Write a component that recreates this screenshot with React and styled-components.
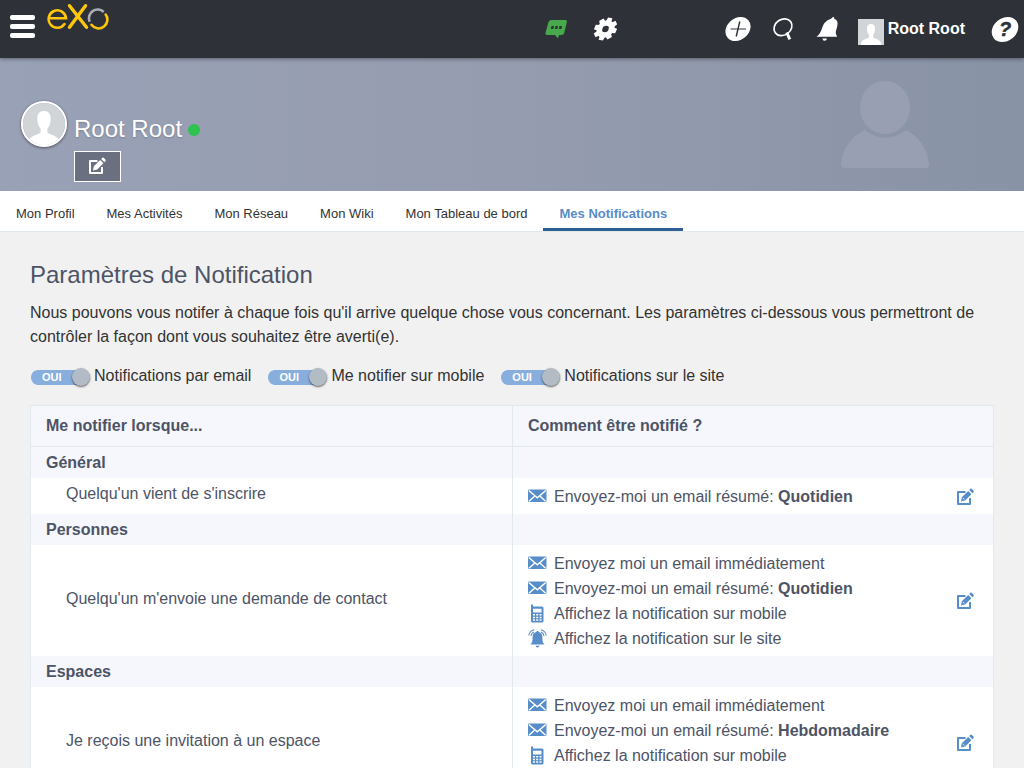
import React from "react";
import styled, { createGlobalStyle } from "styled-components";

const GlobalStyle = createGlobalStyle`
  *, *::before, *::after { box-sizing: border-box; }
  body {
    margin: 0;
    background: #f1f1f1;
    color: #333;
    font-family: "Liberation Sans", Arial, sans-serif;
    font-size: 16px;
    line-height: 24px;
  }
`;

const Page = styled.div`
  height: 100vh;
  overflow: hidden;
`;

const TopBar = styled.header`
  position: relative;
  display: flex;
  align-items: center;
  height: 58px;
  padding: 0 5px 0 10px;
  background: #2e3238;
  box-shadow: 0 1px 4px rgba(0, 0, 0, 0.4);
`;

const IconButton = styled.button`
  display: flex;
  flex: none;
  padding: 0;
  border: 0;
  background: none;
  color: ${(p) => p.$color || "#fff"};
  cursor: pointer;
`;

const MenuButton = styled(IconButton)`
  flex-direction: column;
  gap: 4px;
  width: 25px;
  padding-bottom: 5px;
`;

const MenuBar = styled.span`
  height: 5px;
  border-radius: 2px;
  background: #fff;
`;

const LogoLink = styled.a`
  display: flex;
  align-self: flex-start;
  margin: 3px auto 0 12px;
`;

const CenterTools = styled.div`
  display: flex;
  gap: 25px;
  margin-right: 107px;
`;

const RightTools = styled.div`
  display: flex;
  align-items: center;
  gap: 20px;
`;

const UserLink = styled.a`
  display: flex;
  gap: 4px;
  padding: 6px 6px 0 0;
  color: #fff;
  font-weight: bold;
  line-height: 20px;
  text-decoration: none;
  white-space: nowrap;
`;

const Banner = styled.section`
  display: flex;
  justify-content: space-between;
  align-items: flex-end;
  height: 133px;
  padding: 0 95px 9px 21px;
  background: linear-gradient(90deg, #99a1b6, #959caf 50%, #8993a6);
`;

const Profile = styled.div`
  display: flex;
  gap: 7px;
`;

const RoundAvatar = styled.span`
  display: flex;
  flex: none;
  width: 46px;
  height: 46px;
  overflow: hidden;
  border: 2px solid #fff;
  border-radius: 50%;
  box-shadow: 0 1px 3px rgba(0, 0, 0, 0.5);
`;

const ProfileBody = styled.div`
  padding-top: 13px;
`;

const ProfileName = styled.h1`
  display: flex;
  align-items: center;
  gap: 6px;
  margin: 0 0 7px;
  color: #fff;
  font-size: 24px;
  font-weight: normal;
  line-height: 30px;
  text-shadow: 0 1px 2px rgba(0, 0, 0, 0.2);
`;

const OnlineDot = styled.span`
  width: 12px;
  height: 12px;
  margin-top: 2px;
  border-radius: 50%;
  background: #2fc24f;
`;

const EditProfile = styled(IconButton)`
  justify-content: center;
  align-items: center;
  width: 47px;
  height: 31px;
  padding: 0 2px 2px 0;
  border: 1px solid #fff;
  background: #6b7080;
`;

const BannerFigure = styled.svg`
  flex: none;
  margin-bottom: 14px;
`;

const Tabs = styled.nav`
  display: flex;
  height: 41px;
  border-bottom: 1px solid #e1e8ee;
  background: #fff;
`;

const Tab = styled.a`
  padding: 4px 16px 0;
  border-bottom: 3px solid ${(p) => (p.$active ? "#2f5e92" : "transparent")};
  color: ${(p) => (p.$active ? "#578dc9" : "#333")};
  font-size: 13px;
  font-weight: ${(p) => (p.$active ? "bold" : "normal")};
  line-height: 37px;
  text-decoration: none;
  white-space: nowrap;
`;

const Main = styled.main`
  padding: 23px 30px 30px;
`;

const Title = styled.h2`
  margin: 0;
  color: #4d5466;
  font-size: 24px;
  font-weight: normal;
  line-height: 40px;
`;

const Intro = styled.p`
  margin: 6px 0 15px;
`;

const Switches = styled.div`
  display: flex;
  flex-wrap: wrap;
  gap: 16px;
  margin-bottom: 17px;
`;

const SwitchLabel = styled.label`
  display: flex;
  align-items: center;
  gap: 4px;
  cursor: pointer;
`;

const SwitchTrack = styled.span`
  display: flex;
  align-items: center;
  justify-content: space-between;
  width: 60px;
  height: 15px;
  margin-top: 2px;
  padding-left: 11px;
  border-left: 1px solid transparent;
  border-radius: 8px;
  background: #88aede padding-box;
  color: #fff;
  font-size: 11px;
  font-weight: bold;
  line-height: 15px;
`;

const SwitchInput = styled.input`
  appearance: none;
  width: 18px;
  height: 18px;
  margin: 0;
  border-radius: 50%;
  background: #b3bbc4;
  box-shadow: 0 1px 2px rgba(0, 0, 0, 0.6);
`;

const SettingsTable = styled.table`
  width: 100%;
  table-layout: fixed;
  border: 1px solid #e1e8ee;
  border-spacing: 0;
  background: #fff;
  color: #4d5466;
`;

const Cell = styled.td`
  padding: 0;
  text-align: left;

  & + & {
    border-left: 1px solid #e1e8ee;
  }
`;

const HeadCell = styled(Cell)`
  height: 41px;
  padding: 0 15px;
  border-bottom: 1px solid #e1e8ee;
  background: #f5f7fc;
`;

const CategoryCell = styled(Cell)`
  height: 31px;
  padding: 0 15px;
  background: #f5f7fc;
  font-weight: bold;
`;

const TriggerCell = styled(Cell)`
  padding: 0 15px 4px 35px;
`;

const MethodCell = styled(Cell)`
  padding: 6px 19px 5px 15px;
`;

const MethodLayout = styled.div`
  display: flex;
  align-items: center;
  justify-content: space-between;
`;

const MethodList = styled.ul`
  margin: 0;
  padding: 0;
  list-style: none;
`;

const Method = styled.li`
  display: flex;
  align-items: center;
  gap: 7px;
  line-height: 25px;
`;

const MethodIcon = styled.svg`
  flex: none;
  color: #578dc9;
`;

function Person({ size }) {
  return (
    <svg width={size} height={size} viewBox="0 0 26 26" aria-hidden="true">
      <path fill="#d1d5d8" d="M0 0h26v26H0z" />
      <path
        fill="#fff"
        d="M13 5c-3 0-4.300 2-4.100 5 .1 3 .9 4.500 2 6v2.300c-1 1.500-6.900 1.600-7.900 6V26h20v-1.700c-1-4.400-6.900-4.500-7.900-6V16c1.100-1.500 1.900-3 2-6 .2-3-1.100-5-4.100-5z"
      />
    </svg>
  );
}

function EditIcon() {
  return (
    <svg width="18" height="18" viewBox="0 0 18 18" aria-hidden="true">
      <path fill="none" stroke="currentColor" strokeWidth="2" strokeLinejoin="round" d="M9.500 4H2v12h12V10" />
      <path fill="currentColor" d="M5 13.500l.8-4.300 6.400-6.200 3.200 3.200-6.200 6.300zM13.200 2.100l1.300-1.300q.6-.6 1.200 0l1.900 1.900q.6.600 0 1.200L16.400 5.200z" />
      <path fill="none" stroke="#fff" strokeOpacity=".8" strokeWidth=".8" d="M7.200 9.800l.3 1.300 1.200.3" />
    </svg>
  );
}

function Logo() {
  return (
    <svg width="62" height="28" viewBox="0 0 62 28" fill="none" stroke="#ffc60a" strokeWidth="2.600" strokeLinecap="round" aria-hidden="true">
      <path d="M4 15.300H19A8.700 8.700 0 1 0 17.500 21" />
      <path strokeWidth="3.400" d="M22.500 2.700L39.500 24.300M38.500 2.700L22.500 24.300" />
      <path strokeLinecap="butt" stroke="#a9adb4" d="M42.700 18.800A8.700 8.700 0 0 1 56.700 9" />
      <path d="M58.700 11.500A8.700 8.700 0 0 1 44.500 21.800" />
    </svg>
  );
}

function ChatIcon() {
  return (
    <svg width="24" height="24" viewBox="0 0 24 24" aria-hidden="true">
      <path fill="#48a84c" d="M7.500 3H21.500Q23.300 3 22.900 5L20.300 15.800Q19.700 18 17.500 18H15.200L13.800 21.300 11 18H3.200Q1 18 1.500 16L4.500 5Q5.200 3 7.500 3z" />
      <path fill="#2e3238" d="M7.500 9h2.500l-.6 3H6.900zM11.500 9H14l-.6 3h-2.500zM15.500 9H18l-.6 3h-2.500z" />
    </svg>
  );
}

function GearIcon() {
  return (
    <svg width="24" height="24" viewBox="0 0 24 24" aria-hidden="true">
      <g transform="translate(12.500 12) skewX(-14)">
        <circle r="6" fill="none" stroke="currentColor" strokeWidth="5.600" />
        {[0, 45, 90, 135, 180, 225, 270, 315].map((angle) => (
          <path key={angle} fill="currentColor" transform={`rotate(${angle + 10})`} d="M-2.800-7.500L-2.300-11.300H2.300L2.800-7.500z" />
        ))}
      </g>
    </svg>
  );
}

function PlusIcon() {
  return (
    <svg width="28" height="28" viewBox="0 0 28 28" aria-hidden="true">
      <ellipse cx="14" cy="14" rx="13.600" ry="10.900" fill="currentColor" transform="rotate(-40 14 14)" />
      <path stroke="#6b7078" strokeWidth="1.400" d="M6.500 14H22" />
      <path stroke="#2e3238" strokeWidth="1.400" d="M15.800 6.500l-3.600 15" />
    </svg>
  );
}

function SearchIcon() {
  return (
    <svg width="24" height="24" viewBox="0 0 24 24" fill="none" stroke="currentColor" aria-hidden="true">
      <ellipse cx="11" cy="10.200" rx="9.500" ry="7.800" strokeWidth="1.700" transform="rotate(-35 11 10.200)" />
      <path strokeWidth="3" d="M14.800 15.500L17.800 22.300" />
    </svg>
  );
}

function BellIcon() {
  return (
    <svg width="22" height="26" viewBox="0 0 22 26" fill="currentColor" aria-hidden="true">
      <path d="M15.500 2.500Q16 1 17.300 1T18.200 2.800C21.500 4 22 6.500 21.300 10L19.700 16Q19.500 18.500 21.200 20.700H0.500C6 17 5.500 11 8.500 7Q11 3.500 15.500 2.500zM6.500 22.500H11Q10.500 24.800 8.500 24.800T6.500 22.500z" />
    </svg>
  );
}

function HelpIcon() {
  return (
    <svg width="28" height="28" viewBox="0 0 28 28" aria-hidden="true">
      <ellipse cx="14" cy="14.500" rx="14.300" ry="11.400" fill="currentColor" transform="rotate(-38 14 14.500)" />
      <text x="14" y="21" textAnchor="middle" fill="#2e3238" stroke="#2e3238" strokeWidth=".5" fontFamily="Liberation Sans, sans-serif" fontSize="20" fontWeight="bold" fontStyle="italic">?</text>
    </svg>
  );
}

const METHOD_DRAWINGS = {
  mail: (
    <>
      <rect x="0" y="2.500" width="18.500" height="12.500" rx="1" fill="currentColor" />
      <path fill="none" stroke="#fff" strokeWidth="1.400" d="M.8 3.500l8.500 7.300 8.500-7.300M1 14.300l5.500-5M17.600 14.300l-5.500-5" />
    </>
  ),
  mobile: (
    <>
      <path fill="currentColor" d="M3 1.500Q3 .3 4 .3T5 1.500V2.500h9q1.500 0 1.500 1.500v13q0 1.500-1.500 1.500H4.500Q3 18.500 3 17z" />
      <path fill="#fff" d="M5 4.800h8.500v3.700H5zM5 10h2v1.500H5zM8.200 10h2v1.500h-2zM11.500 10h2v1.500h-2zM5 12.700h2v1.500H5zM8.200 12.700h2v1.500h-2zM11.500 12.700h2v1.500h-2zM5 15.300h2v1.500H5zM8.200 15.300h2v1.500h-2zM11.500 15.300h2v1.500h-2z" />
    </>
  ),
  bell: (
    <>
      <path fill="currentColor" d="M8.300 3q0-1 1.200-1t1.200 1c2.600.6 3.700 2.500 3.700 5.200 0 4.300.6 5.800 2.300 7.300H2.300c1.700-1.500 2.300-3 2.300-7.300C4.600 5.500 5.700 3.600 8.300 3zM7.500 16.700h4q-.5 1.800-2 1.800t-2-1.800z" />
      <path fill="none" stroke="currentColor" strokeWidth="1.100" d="M.8 6.500Q1.500 2 6.300.8M3 6.800Q3.400 4 6 3M18.200 6.500Q17.500 2 12.700.8M16 6.800Q15.600 4 13 3" />
    </>
  ),
};

const TABS = ["Mon Profil", "Mes Activités", "Mon Réseau", "Mon Wiki", "Mon Tableau de bord", "Mes Notifications"];
const SWITCHES = ["Notifications par email", "Me notifier sur mobile", "Notifications sur le site"];

const allMethods = (frequency) => [
  { icon: "mail", text: "Envoyez moi un email immédiatement" },
  { icon: "mail", text: "Envoyez-moi un email résumé: ", frequency },
  { icon: "mobile", text: "Affichez la notification sur mobile" },
  { icon: "bell", text: "Affichez la notification sur le site" },
];

const GROUPS = [
  {
    name: "Général",
    trigger: "Quelqu'un vient de s'inscrire",
    methods: [{ icon: "mail", text: "Envoyez-moi un email résumé: ", frequency: "Quotidien" }],
  },
  { name: "Personnes", trigger: "Quelqu'un m'envoie une demande de contact", methods: allMethods("Quotidien") },
  { name: "Espaces", trigger: "Je reçois une invitation à un espace", methods: allMethods("Hebdomadaire") },
];

function SettingsGroup({ group }) {
  return (
    <tbody>
      <tr>
        <CategoryCell>{group.name}</CategoryCell>
        <CategoryCell />
      </tr>
      <tr>
        <TriggerCell>{group.trigger}</TriggerCell>
        <MethodCell>
          <MethodLayout>
            <MethodList>
              {group.methods.map((method) => (
                <Method key={method.text}>
                  <MethodIcon width="19" height="19" viewBox="0 0 19 19" aria-hidden="true">
                    {METHOD_DRAWINGS[method.icon]}
                  </MethodIcon>
                  <span>
                    {method.text}
                    {method.frequency && <strong>{method.frequency}</strong>}
                  </span>
                </Method>
              ))}
            </MethodList>
            <IconButton type="button" $color="#578dc9" aria-label="Modifier">
              <EditIcon />
            </IconButton>
          </MethodLayout>
        </MethodCell>
      </tr>
    </tbody>
  );
}

export default function App() {
  return (
    <Page>
      <GlobalStyle />
      <TopBar>
        <MenuButton type="button" aria-label="Menu">
          <MenuBar />
          <MenuBar />
          <MenuBar />
        </MenuButton>
        <LogoLink href="#" aria-label="eXo">
          <Logo />
        </LogoLink>
        <CenterTools>
          <IconButton type="button" aria-label="Discussion"><ChatIcon /></IconButton>
          <IconButton type="button" aria-label="Administration"><GearIcon /></IconButton>
        </CenterTools>
        <RightTools>
          <IconButton type="button" aria-label="Créer"><PlusIcon /></IconButton>
          <IconButton type="button" aria-label="Rechercher"><SearchIcon /></IconButton>
          <IconButton type="button" aria-label="Notifications"><BellIcon /></IconButton>
          <UserLink href="#">
            <Person size={26} />
            Root Root
          </UserLink>
          <IconButton type="button" aria-label="Aide"><HelpIcon /></IconButton>
        </RightTools>
      </TopBar>

      <Banner>
        <Profile>
          <RoundAvatar><Person size={42} /></RoundAvatar>
          <ProfileBody>
            <ProfileName>
              Root Root
              <OnlineDot />
            </ProfileName>
            <EditProfile type="button" aria-label="Modifier le profil"><EditIcon /></EditProfile>
          </ProfileBody>
        </Profile>
        <BannerFigure width="88" height="87" viewBox="0 0 88 87" fill="#999fb3" aria-hidden="true">
          <ellipse cx="44" cy="26.500" rx="25" ry="26.500" />
          <path d="M0 83C2 66 11 55 24 49Q44 65 65 49C77 55 86 66 88 83Q88 87 84 87H4Q0 87 0 83z" />
        </BannerFigure>
      </Banner>

      <Tabs>
        {TABS.map((tab) => (
          <Tab key={tab} href="#" $active={tab === "Mes Notifications"}>{tab}</Tab>
        ))}
      </Tabs>

      <Main>
        <Title>Paramètres de Notification</Title>
        <Intro>
          Nous pouvons vous notifer à chaque fois qu'il arrive quelque chose vous concernant. Les paramètres
          ci-dessous vous permettront de contrôler la façon dont vous souhaitez être averti(e).
        </Intro>
        <Switches>
          {SWITCHES.map((label) => (
            <SwitchLabel key={label}>
              <SwitchTrack>
                OUI
                <SwitchInput type="checkbox" defaultChecked aria-label={label} />
              </SwitchTrack>
              {label}
            </SwitchLabel>
          ))}
        </Switches>
        <SettingsTable>
          <thead>
            <tr>
              <HeadCell as="th">Me notifier lorsque...</HeadCell>
              <HeadCell as="th">Comment être notifié ?</HeadCell>
            </tr>
          </thead>
          {GROUPS.map((group) => (
            <SettingsGroup key={group.name} group={group} />
          ))}
        </SettingsTable>
      </Main>
    </Page>
  );
}
